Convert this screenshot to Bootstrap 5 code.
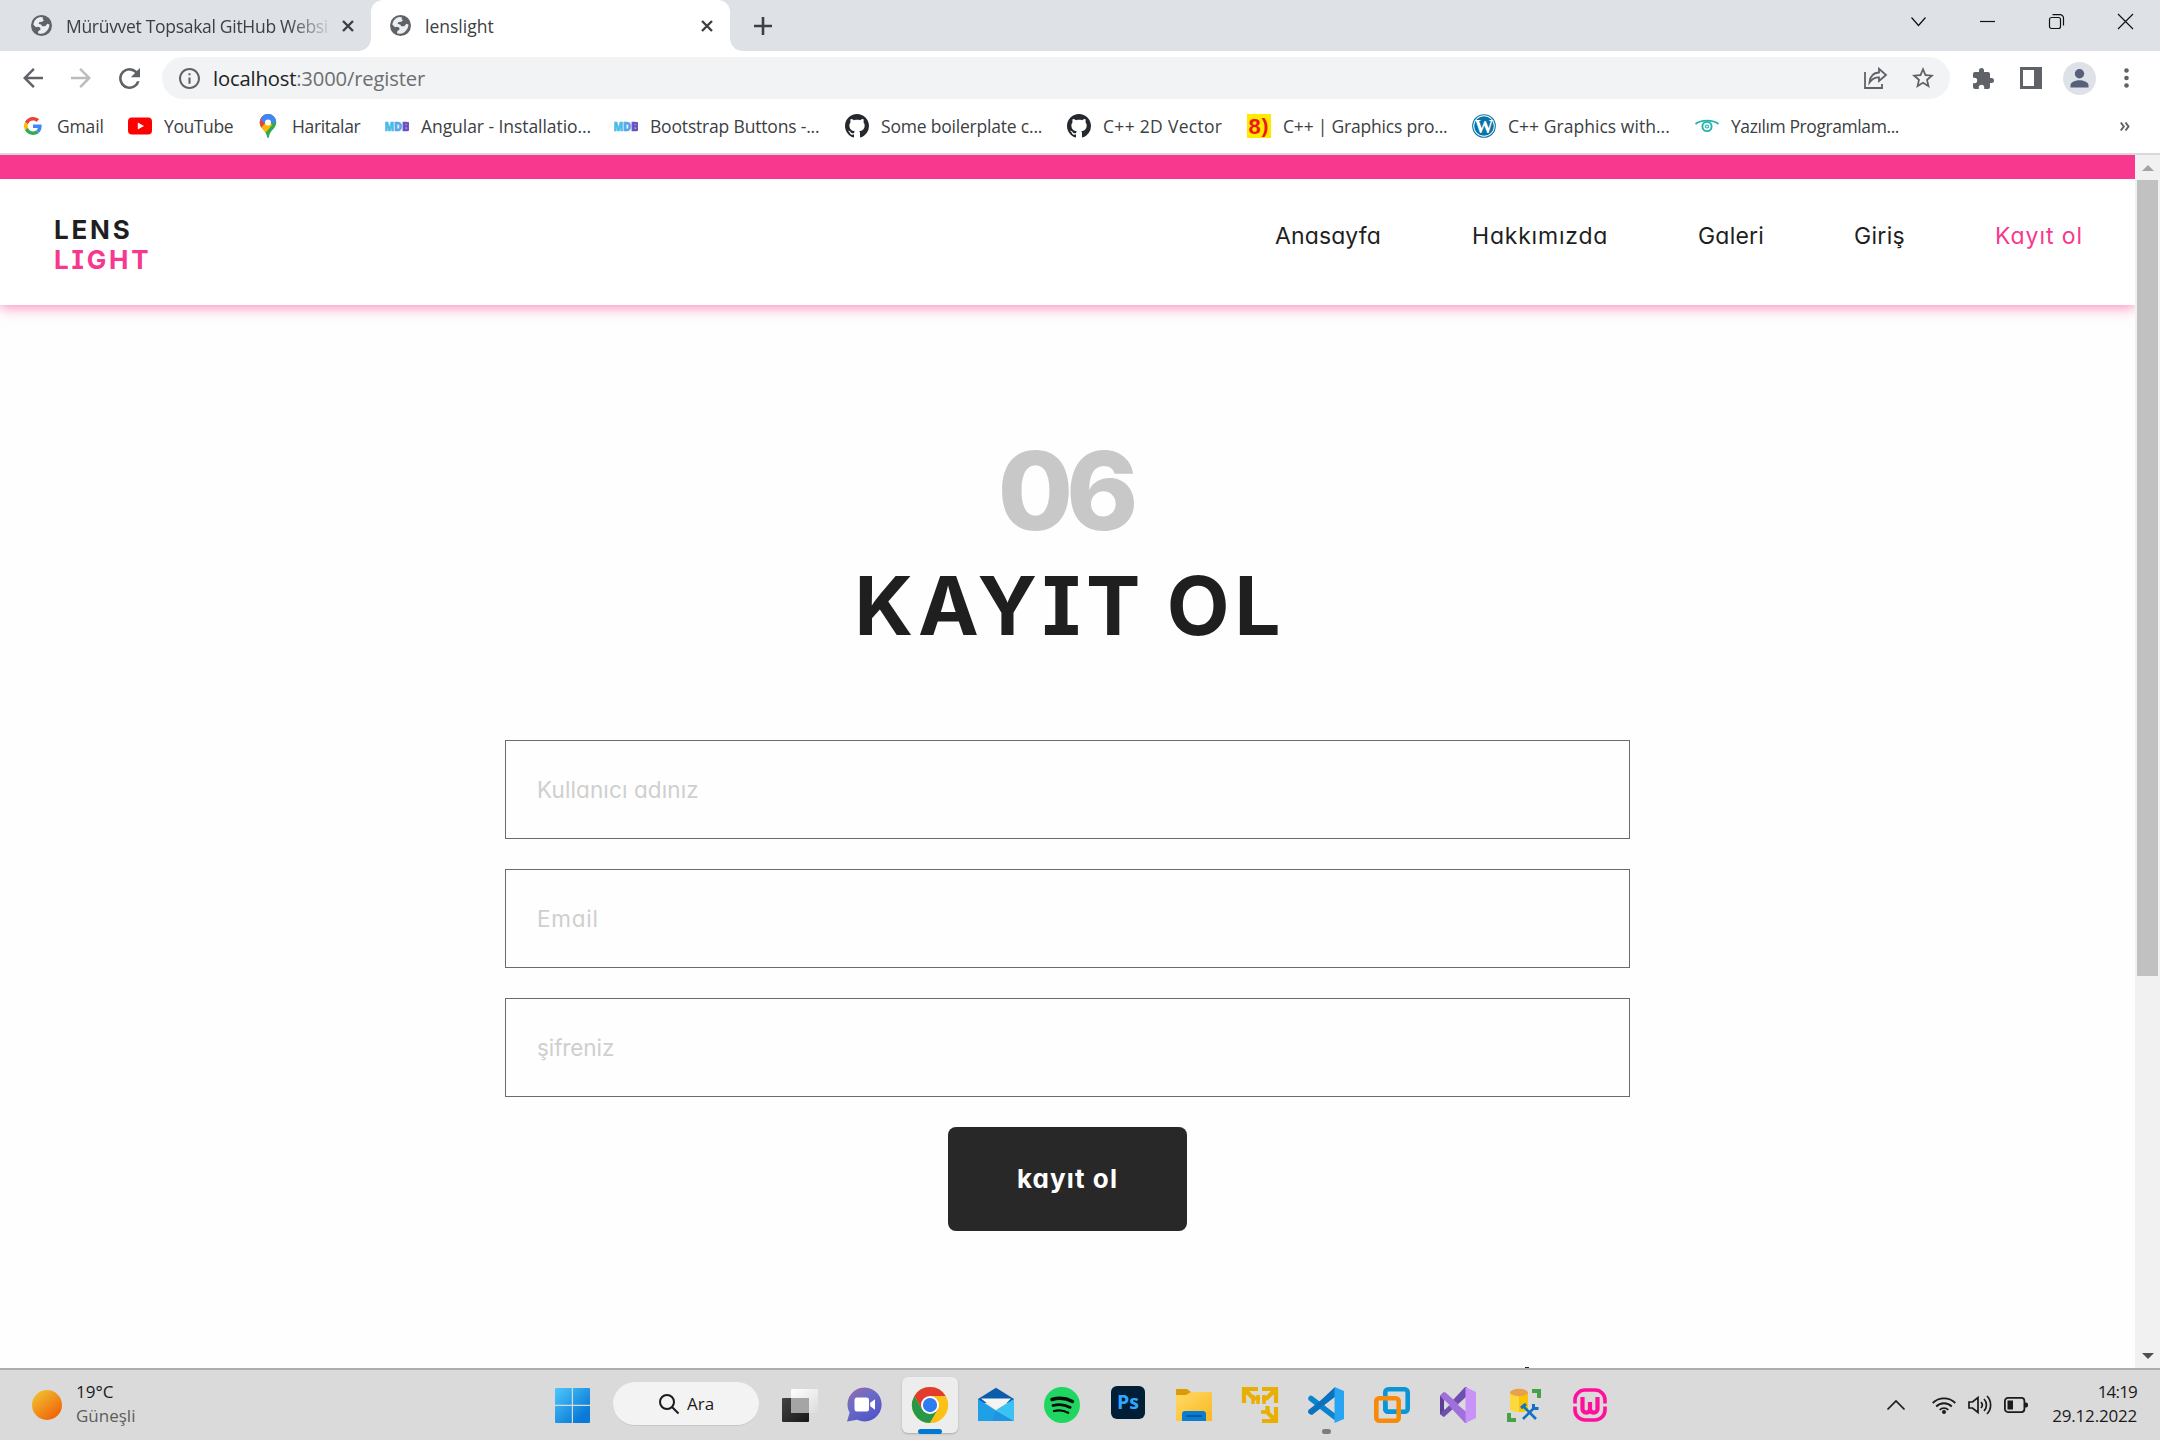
<!DOCTYPE html>
<html lang="tr">
<head>
<meta charset="utf-8">
<meta name="viewport" content="width=device-width, initial-scale=1">
<title>lenslight</title>
<link href="https://cdn.jsdelivr.net/npm/bootstrap@5.3.0/dist/css/bootstrap.min.css" rel="stylesheet">
<style>
  :root { --pink: #f8388e; --ink: #202124; --icon: #5f6368; }
  html, body { height: 100%; overflow: hidden; }
  body { font-family: "Open Sans", "Noto Sans", sans-serif; font-size: 17.5px; line-height: 24px; color: #3c4043; background: #fff; }
  svg { display: block; flex: none; overflow: visible; }
  .shell { width: 2160px; height: 1440px; }

  /* browser tabs */
  .tabstrip { height: 51px; background: #dee1e6; }
  .tab-item { height: 51px; }
  .tab-idle { width: 371px; padding: 0 17px 0 31px; }
  .tab-live { width: 359px; padding: 0 17px 0 19px; background: #fff; border-radius: 12px 12px 0 0; position: relative; }
  .tab-live::before, .tab-live::after { content: ""; position: absolute; bottom: 0; width: 12px; height: 12px; }
  .tab-live::before { left: -12px; background: radial-gradient(circle at 0 0, transparent 11.5px, #fff 12px); }
  .tab-live::after { right: -12px; background: radial-gradient(circle at 100% 0, transparent 11.5px, #fff 12px); }
  .tab-title { margin-left: 14px; white-space: nowrap; }
  .tab-idle .tab-title { letter-spacing: -.3px; -webkit-mask-image: linear-gradient(90deg, #000 222px, transparent 268px); mask-image: linear-gradient(90deg, #000 222px, transparent 268px); }
  .newtab { margin-left: 24px; }
  .winbtns { padding: 0 27px 8px 0; gap: 54px; }

  /* toolbar */
  .toolbar { height: 54px; padding: 0 31px 0 23px; }
  .nav-forward { margin: 0 28px; }
  .omnibox { width: 1788px; height: 42px; margin-left: 22px; padding: 0 16px 0 17px; border-radius: 21px; background: #f1f3f4; }
  .address { font-size: 20.2px; margin-left: 13px; letter-spacing: -.15px; color: #6b6f73; }
  .address b { font-weight: 400; color: var(--ink); }
  .fav-star { margin-left: 25px; }
  .ext-icon { margin-left: 23px; }
  .side-icon { margin-left: 26px; }
  .avatar-chip { width: 33px; height: 33px; background: #dee1e6; margin-left: 21px; }

  /* bookmarks */
  .bookmarks { height: 48px; padding: 0 30px 6px 21px; }
  .bm { gap: 12px; white-space: nowrap; height: 100%; }
  .bm svg { width: 24px; height: 24px; }
  .bm span { margin-top: -1px; }
  .w-a { width: 107px; letter-spacing: -.15px; } .w-b { width: 128px; letter-spacing: -.4px; } .w-c { width: 129px; letter-spacing: -.35px; }
  .w-d { width: 229px; letter-spacing: -.06px; } .w-e { width: 231px; letter-spacing: -.18px; } .w-f { width: 222px; letter-spacing: -.2px; }
  .w-g { width: 180px; letter-spacing: .3px; } .w-h { width: 225px; letter-spacing: -.2px; }
  .w-i { width: 223px; letter-spacing: .04px; } .w-j { letter-spacing: -.41px; }

  /* page */
  .viewport { height: 1215px; border-top: 2px solid #d9d9db; }
  .page { width: 2135px; height: 1213px; overflow: hidden; background: #fefefe; font-family: Inter, Lato, sans-serif; font-feature-settings: "cv11", "cv08"; color: #1f1f1f; position: relative; }
  .topline { height: 24px; background: var(--pink); }
  .site-head { height: 126px; padding: 0 52px 0 54px; background: #fff; box-shadow: 0 3px 12px rgba(248,56,142,.55); clip-path: inset(0 0 -30px 0); }
  .brand { font-weight: 700; font-size: 26px; line-height: 30px; letter-spacing: 2.8px; padding-top: 5px; }
  .pink { color: var(--pink) !important; }
  .menu { font-size: 23px; line-height: 30px; padding-bottom: 12px; }
  .menu a { color: #1f1f1f; text-decoration: none; white-space: nowrap; }
  .m1 { width: 197px; letter-spacing: .12px; } .m2 { width: 226px; letter-spacing: .8px; } .m3 { width: 156px; letter-spacing: .2px; }
  .m4 { width: 141px; letter-spacing: .3px; } .m5 { width: 88px; letter-spacing: .95px; }
  .number { font-weight: 800; font-size: 109px; line-height: 109px; letter-spacing: -7px; margin-top: 131px; margin-right: 6px; color: #c8c8c8; }
  .heading { font-weight: 700; font-size: 81.5px; line-height: 81px; letter-spacing: 5px; word-spacing: -3px; margin: 20px -5px 94px 0; color: #1f1f1f; }
  .signup { width: 1125px; gap: 30px; }
  .signup .form-control, .btn-signup { font-feature-settings: "cv11", "cv08"; }
  .signup .form-control { height: 99px; border: 1.5px solid #6b6b6b; border-radius: 0; padding: 0 31px 1px; font-size: 22.5px; letter-spacing: .12px; background: #fefefe; }
  .signup .form-control::placeholder { color: #cfcfcf; opacity: 1; }
  .signup .f-mail { letter-spacing: .75px; } .signup .f-pass { letter-spacing: -.1px; }
  .btn-signup { width: 239px; height: 104px; border-radius: 8px; background: #282828; color: #fff; font-weight: 700; font-size: 26px; letter-spacing: 1.1px; padding: 0 0 2px; border: 0; }
  .peek { position: absolute; left: 1525px; bottom: 0; width: 4px; height: 1px; background: #222; }

  /* scrollbar */
  .vbar { width: 25px; background: #f1f1f1; padding: 10px 0 9px; }
  .thumb { width: 21px; height: 796px; background: #c1c1c1; margin-top: 9px; }

  /* taskbar */
  .taskbar { height: 72px; background: #dadada; border-top: 2px solid #adadad; color: #1b1b1b; font-size: 17px; line-height: 24px; }
  .weather { padding-left: 32px; width: 555px; }
  .weather-text { margin-left: 14px; padding-bottom: 3px; }
  .muted { color: #5d5d5d; }
  .searchpill { width: 146px; height: 44px; border-radius: 22px; background: #f3f3f3; border-bottom: 1px solid #c6c6c6; margin: 0 0 2px 23px; padding-left: 46px; gap: 8px; }
  .apps { margin: 0 0 1px 14px; }
  .app-slot { width: 56px; height: 56px; margin-right: 10px; position: relative; border-radius: 6px; }
  .app-first { width: 53px; }
  .app-live { background: #ededed; box-shadow: 0 1px 2px rgba(0,0,0,.22); }
  .app-slot i { position: absolute; bottom: -1px; left: 16px; width: 24px; height: 5px; border-radius: 3px; background: #0078d4; }
  .app-slot i.idle { left: 24px; width: 9px; background: #7d7d7d; }
  .tray { padding-right: 23px; }
  .tray .t-wifi { margin-left: 27px; } .tray .t-gap { margin-left: 12px; }
  .clock { width: 109px; letter-spacing: -.2px; padding-bottom: 3px; }
  .clock span { letter-spacing: -.8px; }
</style>
</head>
<body>
<svg width="0" height="0" class="d-none">
  <symbol id="globe" viewBox="2 2 20 20"><circle cx="12" cy="12" r="10" fill="#5f6368"/><path fill="#eceef1" d="M4.3 11.2c.3-3.600 3.200-6.900 7-7.200l2.200.3-.4 1.600 1.200 1.100-1.600 1.500-2.600.2-.9 1.700 2.700.8.700 1.500h2.500l1.300-.6 1-1.700 2.200.600c-.2 4.600-3.700 8.600-8 8.800-.8.100-2.200-.2-2.900-.5l.3-2.100 2-1.200-.2-2-2.300-.9-1.700.6z"/></symbol>
  <symbol id="cross" viewBox="0 0 12 12"><path d="M1 1l10 10M11 1L1 11" stroke="#3c4043" stroke-width="2.400" fill="none"/></symbol>
  <symbol id="octo" viewBox="0 0 16 16"><path fill="#24292f" d="M8 0C3.580 0 0 3.580 0 8c0 3.540 2.290 6.530 5.470 7.590.4.070.55-.17.55-.38 0-.19-.01-.82-.01-1.490-2.010.37-2.530-.49-2.690-.94-.09-.23-.48-.94-.82-1.130-.28-.15-.68-.52-.01-.53.63-.01 1.080.58 1.230.82.72 1.210 1.870.87 2.330.66.07-.52.28-.87.51-1.070-1.780-.2-3.640-.89-3.640-3.950 0-.87.31-1.590.82-2.150-.08-.2-.36-1.020.08-2.120 0 0 .67-.21 2.200.82.64-.18 1.320-.27 2-.27s1.360.09 2 .27c1.530-1.040 2.200-.82 2.200-.82.44 1.100.16 1.920.08 2.120.51.56.82 1.270.82 2.150 0 3.070-1.870 3.750-3.650 3.950.29.25.54.73.54 1.480 0 1.070-.01 1.930-.01 2.200 0 .21.15.46.55.38A8.010 8.010 0 0 0 16 8c0-4.420-3.580-8-8-8z"/></symbol>
  <symbol id="mdb" viewBox="0 0 24 24"><text x="-.5" y="17" font-family="Open Sans" font-weight="800" font-size="13" textLength="9.500" lengthAdjust="spacingAndGlyphs" fill="#45bdea" stroke="#45bdea" stroke-width=".7">M</text><text x="9" y="17" font-family="Open Sans" font-weight="800" font-size="13" textLength="8" lengthAdjust="spacingAndGlyphs" fill="#58a8e6" stroke="#58a8e6" stroke-width=".7">D</text><text x="17" y="17" font-family="Open Sans" font-weight="800" font-size="13" textLength="8" lengthAdjust="spacingAndGlyphs" fill="#6a4fc4" stroke="#6a4fc4" stroke-width=".7">B</text></symbol>
</svg>

<div class="shell d-flex flex-column">
  <div class="tabstrip d-flex align-items-center">
    <div class="tab-item tab-idle d-flex align-items-center">
      <svg width="21" height="21"><use href="#globe"/></svg>
      <span class="tab-title">Mürüvvet Topsakal GitHub Websi</span>
      <svg width="12" height="12" class="ms-auto"><use href="#cross"/></svg>
    </div>
    <div class="tab-item tab-live d-flex align-items-center">
      <svg width="21" height="21"><use href="#globe"/></svg>
      <span class="tab-title">lenslight</span>
      <svg width="12" height="12" class="ms-auto"><use href="#cross"/></svg>
    </div>
    <svg class="newtab" width="18" height="18" viewBox="0 0 18 18"><path d="M9 0v18M0 9h18" stroke="#3c4043" stroke-width="2.600"/></svg>
    <div class="winbtns d-flex align-items-center ms-auto">
      <svg width="15" height="15" viewBox="0 0 15 15" fill="none" stroke="#111" stroke-width="1.200"><path d="M.5 3.500l7 8 7-8"/></svg>
      <svg width="15" height="15" viewBox="0 0 15 15" stroke="#111" stroke-width="1.200"><path d="M0 7.500h15"/></svg>
      <svg width="15" height="15" viewBox="0 0 15 15" fill="none" stroke="#111" stroke-width="1.200"><rect x=".5" y="3.500" width="11" height="11" rx="2"/><path d="M3.500.6H11a3.500 3.500 0 0 1 3.500 3.500v7.400"/></svg>
      <svg width="15" height="15" viewBox="0 0 15 15" stroke="#111" stroke-width="1.200"><path d="M0 0l15 15M15 0L0 15"/></svg>
    </div>
  </div>

  <div class="toolbar d-flex align-items-center">
    <svg width="20" height="20" viewBox="4 4 16 16"><path fill="#5f6368" d="M20 11H7.830l5.590-5.590L12 4l-8 8 8 8 1.410-1.410L7.830 13H20v-2z"/></svg>
    <svg class="nav-forward" width="20" height="20" viewBox="4 4 16 16"><path fill="#babcbe" d="M12 4l-1.410 1.410L16.170 11H4v2h12.170l-5.580 5.590L12 20l8-8z"/></svg>
    <svg width="21" height="21" viewBox="4 4 16 16"><path fill="#5f6368" d="M17.650 6.350A7.960 7.960 0 0 0 12 4a8 8 0 1 0 7.730 10h-2.080A6 6 0 1 1 12 6c1.660 0 3.140.69 4.220 1.780L13 11h7V4l-2.350 2.350z"/></svg>
    <div class="omnibox d-flex align-items-center">
      <svg width="21" height="21" viewBox="2 2 20 20"><path fill="#5f6368" d="M11 7h2v2h-2zm0 4h2v6h-2zm1-9C6.480 2 2 6.480 2 12s4.480 10 10 10 10-4.480 10-10S17.520 2 12 2zm0 18c-4.410 0-8-3.590-8-8s3.590-8 8-8 8 3.590 8 8-3.590 8-8 8z"/></svg>
      <span class="address"><b>localhost</b>:3000/register</span>
      <svg class="ms-auto" width="23" height="22" viewBox="0 0 23 22" fill="none" stroke="#5f6368" stroke-width="1.800"><path d="M1 5v16h17v-4"/><path d="M5.500 15.500C6 9.500 9.500 5.800 15 5.500V1.800L22 8l-7 6v-3.600c-4-.2-7 1.600-9.500 5.100z"/></svg>
      <svg class="fav-star" width="22" height="22" viewBox="2 2 20 20"><path fill="#5f6368" d="M22 9.240l-7.190-.62L12 2 9.190 8.630 2 9.240l5.460 4.730L5.820 21 12 17.270 18.180 21l-1.630-7.030L22 9.240zM12 15.400l-3.760 2.270 1-4.280-3.320-2.880 4.380-.38L12 6.100l1.710 4.040 4.380.38-3.320 2.880 1 4.280L12 15.400z"/></svg>
    </div>
    <svg class="ext-icon" width="21" height="21" viewBox="2 1 21 21"><path fill="#5f6368" d="M20.500 11H19V7a2 2 0 0 0-2-2h-4V3.500a2.500 2.500 0 0 0-5 0V5H4a2 2 0 0 0-1.990 2v3.800H3.500a2.700 2.700 0 0 1 0 5.400H2V20a2 2 0 0 0 2 2h3.800v-1.500a2.700 2.700 0 0 1 5.400 0V22H17a2 2 0 0 0 2-2v-4h1.500a2.500 2.500 0 0 0 0-5z"/></svg>
    <svg class="side-icon" width="22" height="22" viewBox="0 0 22 22"><path fill="#5f6368" fill-rule="evenodd" d="M0 0h22v22H0zM3 3v16h11V3z"/></svg>
    <span class="avatar-chip rounded-circle d-flex justify-content-center align-items-center"><svg width="19" height="19" viewBox="0 0 19 19" fill="#56607a"><circle cx="9.500" cy="4.800" r="4.700"/><path d="M.5 18.500v-2.500c0-3 5.500-4.800 9-4.800s9 1.800 9 4.800v2.500z"/></svg></span>
    <svg class="ms-auto" width="5" height="20" viewBox="0 0 5 20" fill="#5f6368"><circle cx="2.500" cy="2.500" r="2.300"/><circle cx="2.500" cy="10" r="2.300"/><circle cx="2.500" cy="17.500" r="2.300"/></svg>
  </div>

  <div class="bookmarks d-flex align-items-center">
    <div class="bm w-a d-flex align-items-center"><svg viewBox="-8 -8 64 64"><path fill="#EA4335" d="M24 9.500c3.540 0 6.710 1.220 9.210 3.600l6.850-6.850C35.900 2.380 30.470 0 24 0 14.620 0 6.510 5.380 2.560 13.220l7.980 6.190C12.430 13.720 17.740 9.500 24 9.500z"/><path fill="#4285F4" d="M46.980 24.550c0-1.570-.15-3.090-.38-4.550H24v9.020h12.940c-.58 2.960-2.260 5.480-4.780 7.180l7.730 6c4.510-4.180 7.090-10.360 7.090-17.650z"/><path fill="#FBBC05" d="M10.530 28.590A14.500 14.500 0 0 1 9.770 24c0-1.600.27-3.140.76-4.590l-7.980-6.190A23.900 23.900 0 0 0 0 24c0 3.880.92 7.540 2.560 10.780z"/><path fill="#34A853" d="M24 48c6.480 0 11.930-2.130 15.890-5.810l-7.730-6c-2.150 1.450-4.920 2.300-8.160 2.300-6.260 0-11.570-4.220-13.470-9.910l-7.980 6.190C6.510 42.620 14.620 48 24 48z"/></svg><span>Gmail</span></div>
    <div class="bm w-b d-flex align-items-center"><svg viewBox="0 0 24 24"><rect y="3.500" width="24" height="17" rx="4" fill="#f00"/><path fill="#fff" d="M9.800 8.400v7.200L16 12z"/></svg><span>YouTube</span></div>
    <div class="bm w-c d-flex align-items-center"><svg viewBox="0 0 24 24"><defs><clipPath id="pin"><path d="M12 0a8.300 8.300 0 0 0-8.300 8.400c0 6 6.600 7.600 7.400 14.600.1 1.300 1.700 1.300 1.800 0 .8-7 7.400-8.600 7.400-14.600A8.300 8.300 0 0 0 12 0z"/></clipPath></defs><g clip-path="url(#pin)"><path fill="#34a853" d="M0 0h24v24H0z"/><path fill="#fbbc04" d="M-2 16l13-12 5 7-10 12z"/><path fill="#ea4335" d="M0 0h8l4 6-7 8-5-4z"/><path fill="#4285f4" d="M6 0h17v6l-6 3-5-2-3 3-4-4z"/></g><circle cx="12" cy="8.400" r="3" fill="#fff"/></svg><span>Haritalar</span></div>
    <div class="bm w-d d-flex align-items-center"><svg><use href="#mdb"/></svg><span>Angular - Installatio...</span></div>
    <div class="bm w-e d-flex align-items-center"><svg><use href="#mdb"/></svg><span>Bootstrap Buttons -...</span></div>
    <div class="bm w-f d-flex align-items-center"><svg><use href="#octo"/></svg><span>Some boilerplate c...</span></div>
    <div class="bm w-g d-flex align-items-center"><svg><use href="#octo"/></svg><span>C++ 2D Vector</span></div>
    <div class="bm w-h d-flex align-items-center"><svg viewBox="0 0 24 24"><path fill="#ffea00" d="M0 0h24v24H0z"/><text x="1.500" y="20" font-family="Liberation Sans" font-weight="700" font-size="22" letter-spacing="0" fill="#f01414">8</text><text x="14.500" y="18.500" font-family="Liberation Sans" font-weight="700" font-size="21" fill="#f01414">)</text></svg><span>C++ | Graphics pro...</span></div>
    <div class="bm w-i d-flex align-items-center"><svg viewBox="0 0 24 24"><circle cx="12" cy="12" r="11.300" fill="#fff" stroke="#1177aa" stroke-width="1.100"/><circle cx="12" cy="12" r="9.800" fill="#0a74a8"/><text x="12" y="18.500" text-anchor="middle" font-family="Liberation Serif" font-weight="700" font-size="19" letter-spacing="0" fill="#fff">W</text></svg><span>C++ Graphics with...</span></div>
    <div class="bm w-j d-flex align-items-center"><svg viewBox="0 0 24 24" fill="none" stroke="#1fb5ac"><path d="M.5 10C6 5.500 18 5.500 23.500 10" stroke-width="1.800"/><circle cx="12" cy="12.500" r="4.600" stroke-width="1.900"/><circle cx="12" cy="12.500" r="1.500" stroke-width="1.200"/></svg><span>Yazılım Programlam...</span></div>
    <svg class="ms-auto" width="10" height="9" viewBox="0 0 10 9" fill="none" stroke="#5f6368" stroke-width="2"><path d="M.8.500l3 4-3 4M5.500.500l3 4-3 4"/></svg>
  </div>

  <div class="viewport d-flex">
    <div class="page d-flex flex-column">
      <div class="topline"></div>
      <header class="site-head d-flex align-items-center justify-content-between">
        <div class="brand">LENS<br><span class="pink">LIGHT</span></div>
        <nav class="menu d-flex">
          <a class="m1" href="#">Anasayfa</a><a class="m2" href="#">Hakkımızda</a><a class="m3" href="#">Galeri</a><a class="m4" href="#">Giriş</a><a class="m5 pink" href="#">Kayıt ol</a>
        </nav>
      </header>
      <main class="d-flex flex-column align-items-center">
        <div class="number">06</div>
        <h1 class="heading">KAYIT OL</h1>
        <form class="signup d-flex flex-column align-items-center">
          <input class="form-control" type="text" placeholder="Kullanıcı adınız">
          <input class="form-control f-mail" type="email" placeholder="Email">
          <input class="form-control f-pass" type="password" placeholder="şifreniz">
          <button class="btn btn-signup" type="button">kayıt ol</button>
        </form>
      </main>
      <span class="peek"></span>
    </div>
    <div class="vbar d-flex flex-column align-items-center">
      <svg width="12" height="6" viewBox="0 0 12 6"><path fill="#a3a3a3" d="M0 6l6-6 6 6z"/></svg>
      <div class="thumb"></div>
      <svg class="mt-auto" width="12" height="6" viewBox="0 0 12 6"><path fill="#505050" d="M0 0h12L6 6z"/></svg>
    </div>
  </div>

  <footer class="taskbar d-flex align-items-center">
    <div class="weather d-flex align-items-center">
      <svg width="30" height="30" viewBox="0 0 30 30"><defs><linearGradient id="sun" x1=".15" y1=".1" x2=".75" y2=".85"><stop stop-color="#f1bd30"/><stop offset="1" stop-color="#f06a0c"/></linearGradient></defs><circle cx="15" cy="15" r="15" fill="url(#sun)"/></svg>
      <div class="weather-text">19°C<br><span class="muted">Güneşli</span></div>
    </div>
    <svg width="35" height="35" viewBox="0 0 35 35"><defs><linearGradient id="win" x1="0" y1="0" x2="1" y2="1"><stop stop-color="#4cc9fb"/><stop offset=".8" stop-color="#0a7ad8"/></linearGradient></defs><path fill="url(#win)" d="M1 0h15.800v16.800H0V1a1 1 0 0 1 1-1zM18 0h16a1 1 0 0 1 1 1v15.800H18zM0 18h16.800v17H1a1 1 0 0 1-1-1zM18 18h17v16a1 1 0 0 1-1 1H18z"/></svg>
    <div class="searchpill d-flex align-items-center"><svg width="20" height="20" viewBox="0 0 20 20" fill="none" stroke="#1b1b1b" stroke-width="2"><circle cx="8" cy="8" r="7"/><path d="M13 13l6.500 6.500"/></svg>Ara</div>
    <div class="apps d-flex">
      <div class="app-slot app-first d-flex align-items-center justify-content-center"><svg width="36" height="36" viewBox="0 0 36 36"><defs><linearGradient id="tvd" x1="0" y1="0" x2="1" y2="1"><stop stop-color="#444"/><stop offset="1" stop-color="#181818"/></linearGradient><linearGradient id="tvl" x1="0" y1="0" x2="1" y2="1"><stop stop-color="#fff"/><stop offset="1" stop-color="#dcdcdc"/></linearGradient></defs><rect x="0" y="11" width="27" height="24" rx="1" fill="url(#tvd)"/><rect x="9" y="2" width="27" height="24" rx="1" fill="url(#tvl)"/><path d="M9 11h18v15H9z" fill="#a5a5a5"/></svg></div>
      <div class="app-slot d-flex align-items-center justify-content-center"><svg width="35" height="35" viewBox="0 0 35 35"><defs><linearGradient id="cht" x1="0" y1="0" x2=".7" y2="1"><stop stop-color="#9b6aa8"/><stop offset=".45" stop-color="#6c6bc6"/><stop offset="1" stop-color="#5054c8"/></linearGradient></defs><path fill="url(#cht)" d="M17.500.5a17 17 0 1 1-7.300 32.300L0 34.500l2.600-8.800A17 17 0 0 1 17.500.5z"/><rect x="7.500" y="10.500" width="14.500" height="14" rx="2.500" fill="#fff"/><path fill="#fff" d="M23.200 15.800l4.800-3.500v10.500l-4.800-3.500z"/></svg></div>
      <div class="app-slot app-live d-flex align-items-center justify-content-center"><svg width="36" height="36" viewBox="0 0 48 48"><circle cx="24" cy="24" r="24" fill="#fbc116"/><path fill="#e33b2e" d="M3.200 12A24 24 0 0 1 44.800 12L45 12.200H24L13.600 30z"/><path fill="#279847" d="M3.200 12A24 24 0 0 0 24 48L34.400 30 24 36 13.600 30z"/><path fill="#fbc116" d="M24 48a24 24 0 0 0 20.800-36H24l10.400 18z"/><circle cx="24" cy="24" r="12" fill="#fff"/><circle cx="24" cy="24" r="9.500" fill="#2f7bf0"/></svg><i></i></div>
      <div class="app-slot d-flex align-items-center justify-content-center"><svg width="36" height="36" viewBox="0 0 36 36"><path fill="#0b5cab" d="M0 12L18 .8 36 12v4H0z"/><path fill="#f4f4f4" d="M3 11.500h30L20 25z"/><path fill="#1f9fe6" d="M0 12l18 11.500L36 34H0z"/><path fill="#39c3f3" d="M36 12v22L18 23z"/><path fill="#198de0" d="M18 23L36 34H14z" opacity=".5"/></svg></div>
      <div class="app-slot d-flex align-items-center justify-content-center"><svg width="36" height="36" viewBox="0 0 36 36" fill="none" stroke="#0b0b0b" stroke-linecap="round"><circle cx="18" cy="18" r="18" fill="#1fd760" stroke="none"/><path d="M8 12.500c7-2 14.500-1.200 20.500 2" stroke-width="3.400"/><path d="M9 18.500c6-1.600 12-.9 17.200 1.900" stroke-width="2.800"/><path d="M10 24c5-1.300 9.900-.7 14.200 1.700" stroke-width="2.300"/></svg></div>
      <div class="app-slot d-flex align-items-center justify-content-center pb-1"><svg width="34" height="33" viewBox="0 0 34 33"><rect width="34" height="33" rx="6" fill="#001e36"/><text x="6" y="23" font-family="Open Sans" font-weight="700" font-size="20" textLength="22" lengthAdjust="spacingAndGlyphs" fill="#31a8ff">Ps</text></svg></div>
      <div class="app-slot d-flex align-items-center justify-content-center"><svg width="36" height="36" viewBox="0 0 36 36"><defs><linearGradient id="fld" x1="0" y1="0" x2="1" y2="1"><stop stop-color="#ffda68"/><stop offset="1" stop-color="#f9b81f"/></linearGradient></defs><path fill="#dc9a05" d="M1 2h10l4 3v5H0V3a1 1 0 0 1 1-1z"/><path fill="url(#fld)" d="M0 8h10l5-3h20a1 1 0 0 1 1 1v28H0z"/><path fill="#0c7cd1" d="M6 34v-7a3 3 0 0 1 3-3h18a3 3 0 0 1 3 3v7z"/><path d="M11 29h14" stroke="#0a4d92" stroke-width="1.700" stroke-linecap="round"/></svg></div>
      <div class="app-slot d-flex align-items-center justify-content-center"><svg width="36" height="36" viewBox="0 0 36 36" fill="none" stroke="#e8ae00" stroke-width="4.200"><path d="M2 16V2h14M2 2l9.500 9.500H18M20 2h14v14M34 2l-9.500 9.500H20M34 20v14H20M34 34l-8.500-8.500V19"/><path d="M11 8v9M16 8v9M22 8v9M19 25h9" stroke-width="3.400"/></svg></div>
      <div class="app-slot d-flex align-items-center justify-content-center"><svg width="36" height="36" viewBox="0 0 36 36"><path fill="#0b6cb8" d="M0 25.500L27 0v10L4 28z"/><path d="M3 11.500L27 30" stroke="#0b84cf" stroke-width="5.500" stroke-linecap="round"/><path d="M3 24.500L27 6" stroke="#0b73bd" stroke-width="5.500" stroke-linecap="round"/><path fill="#dadada" d="M27 10v16L16.500 18z"/><path fill="#27a4f2" d="M26.500 0L36 4v28l-9.500 4z"/></svg><i class="idle"></i></div>
      <div class="app-slot d-flex align-items-center justify-content-center"><svg width="36" height="36" viewBox="0 0 36 36" fill="none" stroke-width="4.600"><rect x="11.300" y="2.300" width="22.400" height="22.400" rx="3" stroke="#0a95d7"/><rect x="2.300" y="11.300" width="22.400" height="22.400" rx="3" stroke="#f68b0a"/><path d="M11.300 15v6.700a3 3 0 0 0 3 3H22" stroke="#0a95d7"/></svg></div>
      <div class="app-slot d-flex align-items-center justify-content-center"><svg width="36" height="36" viewBox="0 0 36 36"><path fill="#5b3f93" d="M0 9l4-4v25l-4-3z"/><path fill="#6f4fae" d="M0 27l4 3L27 9V0h-2z"/><path fill="#a06fdc" d="M0 9l5-4 22 20v11h-2z"/><path fill="#dadada" d="M4.500 13v10l5-5zM27 10.500v15L18 18z"/><path fill="#c893f8" d="M25.500 0L36 5v26l-10.500 5z"/></svg></div>
      <div class="app-slot d-flex align-items-center justify-content-center"><svg width="36" height="36" viewBox="0 0 36 36"><path fill="#fbd840" d="M4 5h18v17c0 4-18 4-18 0z"/><path fill="#f7c600" d="M13 5h9v17c0 2-4 3-9 3z"/><ellipse cx="13" cy="5.500" rx="9" ry="3.700" fill="#e7a14c"/><path d="M26 4h7v7M3 26v7h7" fill="none" stroke="#46a149" stroke-width="4"/><path d="M17 32l12-12M18 20l12 12" stroke="#1271c4" stroke-width="2.600"/><path d="M15 21l5-4M27.500 17v4.500h5" fill="none" stroke="#1271c4" stroke-width="3"/></svg></div>
      <div class="app-slot d-flex align-items-center justify-content-center"><svg width="34" height="34" viewBox="0 0 34 34" fill="none" stroke="#ff0f9c" stroke-width="3.600"><path d="M2 15.500V12A10 10 0 0 1 12 2h10a10 10 0 0 1 10 10v3.500M2 18.500V22a10 10 0 0 0 10 10h10a10 10 0 0 0 10-10v-3.500"/><path d="M9.500 9v11a3.800 3.800 0 0 0 7.500 1.500 3.800 3.800 0 0 0 7.500-1.500V9M17 14v8" stroke-width="4.200"/></svg></div>
    </div>
    <div class="tray d-flex align-items-center ms-auto">
      <svg width="18" height="10" viewBox="0 0 18 10" fill="none" stroke="#1b1b1b" stroke-width="1.700"><path d="M.5 9.500L9 1l8.500 8.500"/></svg>
      <svg class="t-wifi" width="24" height="18" viewBox="0 0 24 18" fill="none" stroke="#1b1b1b" stroke-width="1.800"><path d="M.7 7a16 16 0 0 1 22.600 0M4.200 10.500a11 11 0 0 1 15.600 0M7.700 13.800a6.200 6.200 0 0 1 8.600 0"/><circle cx="12" cy="16" r="2" fill="#1b1b1b" stroke="none"/></svg>
      <svg class="t-gap" width="24" height="20" viewBox="0 0 24 20" fill="none" stroke="#1b1b1b" stroke-width="1.700"><path d="M1 7v6h3.500L10 17.500v-15L4.500 7zM13 7a4.500 4.500 0 0 1 0 6M16 4a8.700 8.700 0 0 1 0 12M19 1a13 13 0 0 1 0 18"/></svg>
      <svg class="t-gap" width="24" height="16" viewBox="0 0 24 16"><rect x=".9" y=".9" width="19.500" height="14.200" rx="3" fill="none" stroke="#1b1b1b" stroke-width="1.800"/><path fill="#1b1b1b" d="M3.500 3.500h5.500v9H3.500zM21 5.500h1a2 2 0 0 1 2 2v1a2 2 0 0 1-2 2h-1z"/></svg>
      <div class="clock text-end"><span>14:19</span><br>29.12.2022</div>
    </div>
  </footer>
</div>
<script src="https://cdn.jsdelivr.net/npm/bootstrap@5.3.0/dist/js/bootstrap.bundle.min.js"></script>
</body>
</html>
